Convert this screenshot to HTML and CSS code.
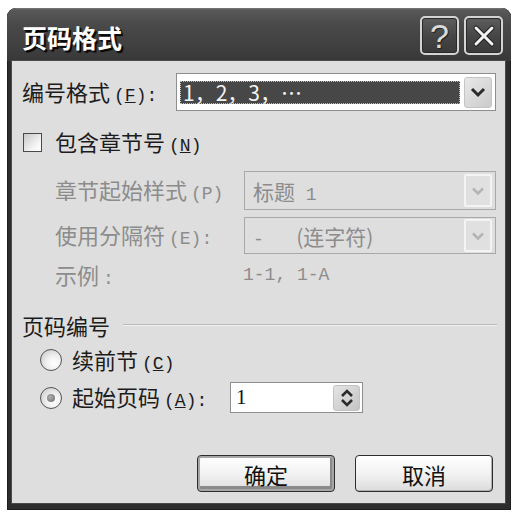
FILE: index.html
```html
<!DOCTYPE html>
<html>
<head>
<meta charset="utf-8">
<link rel="stylesheet" href="styles.css">
</head>
<body>
<div class="dialog">
  <div class="titlebar">
    <span class="title">页码格式</span>
    <div class="tb-btns">
      <div class="tb-btn help">?</div>
      <div class="tb-btn close">
        <svg width="26" height="26" viewBox="0 0 26 26"><path d="M5 5 L21 21 M21 5 L5 21" stroke="#222" stroke-width="5" stroke-linecap="round"/><path d="M5 5 L21 21 M21 5 L5 21" stroke="#f2f2f2" stroke-width="3" stroke-linecap="round"/></svg>
      </div>
    </div>
  </div>
  <div class="client">
    <div class="row r1">
      <span class="lbl lbl1">编号格式<span class="acc">(<u>F</u>):</span></span>
      <div class="combo combo1">
        <div class="sel">1，2，3，⋯</div>
        <div class="dd"><svg width="16" height="12" viewBox="0 0 16 12"><path d="M2 3 L8 9 L14 3" fill="none" stroke="#2a2a2a" stroke-width="3"/></svg></div>
      </div>
    </div>
    <div class="row r2">
      <span class="chk"></span>
      <span class="lbl">包含章节号<span class="acc">(<u>N</u>)</span></span>
    </div>
    <div class="row r3 indent">
      <span class="lbl dis lbl3">章节起始样式<span class="acc">(P)</span></span>
      <div class="combo combo2">
        <span class="val">标题<span class="mono"> 1</span></span>
        <div class="dd dd-dis"><svg width="14" height="10" viewBox="0 0 14 10"><path d="M2 2.5 L7 7.5 L12 2.5" fill="none" stroke="#b4b4b4" stroke-width="2.5"/></svg></div>
      </div>
    </div>
    <div class="row r4 indent">
      <span class="lbl dis lbl3">使用分隔符<span class="acc">(E):</span></span>
      <div class="combo combo2">
        <span class="val"><span class="mono">-   </span>(连字符)</span>
        <div class="dd dd-dis"><svg width="14" height="10" viewBox="0 0 14 10"><path d="M2 2.5 L7 7.5 L12 2.5" fill="none" stroke="#b4b4b4" stroke-width="2.5"/></svg></div>
      </div>
    </div>
    <div class="row r5 indent">
      <span class="lbl dis lbl5">示例<span class="acc">:</span></span>
      <span class="dis mono">1-1, 1-A</span>
    </div>
    <div class="row grp">
      <span class="lbl">页码编号</span>
      <span class="grp-line"></span>
    </div>
    <div class="row rad1">
      <span class="radio"></span>
      <span class="lbl">续前节<span class="acc">(<u>C</u>)</span></span>
    </div>
    <div class="row rad2">
      <span class="radio checked"></span>
      <span class="lbl lbl-spin">起始页码<span class="acc">(<u>A</u>):</span></span>
      <div class="spin">
        <span class="spin-val">1</span>
        <div class="spin-btn"><svg width="14" height="20" viewBox="0 0 14 20"><path d="M2 8 L7 3 L12 8" fill="none" stroke="#2a2a2a" stroke-width="2.6"/><path d="M2 12 L7 17 L12 12" fill="none" stroke="#2a2a2a" stroke-width="2.6"/></svg></div>
      </div>
    </div>
    <div class="row btns">
      <div class="btn default">确定</div>
      <div class="btn">取消</div>
    </div>
  </div>
</div>
</body>
</html>
```

FILE: styles.css
```css
html, body {
  margin: 0;
  padding: 0;
  background: #ffffff;
}
body {
  font-family: "Noto Sans CJK SC", "Noto Sans", sans-serif;
  color: #1c1c1c;
}
.dialog {
  margin: 8px 0 0 7px;
  width: 504px;
  height: 502px;
  background: #2d2d2d;
  border-radius: 9px 9px 0 0;
  display: flex;
  flex-direction: column;
  box-shadow: inset 0 0 0 1px #1e1e1e;
}
.titlebar {
  height: 53px;
  flex: none;
  box-sizing: border-box;
  display: flex;
  align-items: center;
  justify-content: space-between;
  padding: 0 8px 0 15px;
  border-radius: 9px 9px 0 0;
  background: linear-gradient(#7a7a7a 0, #585858 2px, #4a4a4a 30%, #404040 70%, #383838 100%);
}
.title {
  color: #ffffff;
  font-size: 25px;
  font-weight: bold;
  margin-top: 4px;
  text-shadow: 1px 1px 0 #111, 2px 2px 1px #000;
}
.tb-btns {
  display: flex;
  gap: 5px;
  margin-top: 2px;
}
.tb-btn {
  width: 39px;
  height: 39px;
  box-sizing: border-box;
  border: 2px solid #d4d4d4;
  border-radius: 5px;
  background: linear-gradient(#5e5e5e, #464646 50%, #3a3a3a);
  display: flex;
  align-items: center;
  justify-content: center;
  box-shadow: inset 0 0 0 1px #2a2a2a;
}
.help {
  font-family: "Liberation Sans", sans-serif;
  font-size: 34px;
  color: #dadada;
  line-height: 1;
  text-shadow: 1px 1px 0 #222;
}
.client {
  flex: 1;
  margin: 0 6px 7px 5px;
  background: #dedede;
  padding: 12px 9px 0 10px;
  box-shadow: 0 0 0 1px #4a4a4a;
}
.row {
  display: flex;
  align-items: center;
}
.lbl {
  font-size: 22px;
  line-height: 1;
  white-space: nowrap;
}
.acc {
  font-family: "Liberation Mono", monospace;
  font-size: 18px;
  margin-left: 4px;
}
.mono {
  font-family: "Liberation Mono", monospace;
  font-size: 18px;
  white-space: pre;
}
.dis {
  color: #8c8c8c;
}
.r1 { height: 38px; }
.lbl1 { width: 154px; }
.combo {
  box-sizing: border-box;
  height: 100%;
  border: 1px solid #8e8e8e;
  background: #ffffff;
  display: flex;
  align-items: center;
  padding: 0 3px;
}
.combo1 { width: 320px; }
.sel {
  flex: 1;
  height: 23px;
  margin-right: 4px;
  box-sizing: border-box;
  background: #474747;
  outline: 1px dotted #bdbdbd;
  outline-offset: -1px;
  color: #f4f4f4;
  font-size: 21px;
  line-height: 23px;
  padding-left: 3px;
  white-space: nowrap;
}
.dd {
  width: 28px;
  height: 31px;
  box-sizing: border-box;
  border: 1px solid #c4c4c4;
  border-radius: 3px;
  background: linear-gradient(135deg, #e8e8e8, #cbcbcb);
  display: flex;
  align-items: center;
  justify-content: center;
}
.r2 {
  height: 28px;
  margin-top: 17px;
}
.chk {
  width: 19px;
  height: 19px;
  box-sizing: border-box;
  margin-left: 1px;
  margin-right: 13px;
  border: 1px solid #4a4a4a;
  background: linear-gradient(135deg, #c8c8c8, #f6f6f6 70%, #ffffff);
}
.indent { padding-left: 33px; }
.r3 {
  height: 39px;
  margin-top: 15px;
}
.r4 {
  height: 37px;
  margin-top: 7px;
}
.lbl3 { width: 189px; }
.combo2 {
  width: 252px;
  background: #dedede;
  border-color: #a8a8a8;
  justify-content: space-between;
  padding-left: 8px;
}
.val {
  font-size: 21px;
  color: #8c8c8c;
  white-space: pre;
}
.dd-dis {
  height: 33px;
  border: 2px solid #f4f4f4;
  border-radius: 2px;
  background: #e0e0e0;
}
.r5 {
  height: 26px;
  margin-top: 8px;
}
.lbl5 { width: 188px; }
.grp {
  height: 24px;
  margin-top: 25px;
}
.grp-line {
  flex: 1;
  height: 0;
  border-top: 1px solid #b9b9b9;
  border-bottom: 1px solid #f0f0f0;
  margin-left: 13px;
  margin-right: -1px;
}
.rad1 {
  height: 26px;
  margin-top: 10px;
}
.rad2 {
  height: 31px;
  margin-top: 9px;
}
.radio {
  width: 22px;
  height: 22px;
  box-sizing: border-box;
  margin-left: 18px;
  margin-right: 10px;
  border-radius: 50%;
  border: 1px solid #555;
  background: radial-gradient(circle at 65% 65%, #ffffff 0, #f2f2f2 35%, #c4c4c4 100%);
  display: flex;
  align-items: center;
  justify-content: center;
}
.radio.checked::after {
  content: "";
  width: 8px;
  height: 8px;
  border-radius: 50%;
  background: radial-gradient(circle at 40% 40%, #b0b0b0, #6a6a6a);
}
.lbl-spin { width: 158px; }
.spin {
  width: 133px;
  height: 31px;
  box-sizing: border-box;
  border: 1px solid #8e8e8e;
  background: #ffffff;
  display: flex;
  align-items: center;
  justify-content: space-between;
  padding: 0 2px 0 5px;
}
.spin-val {
  font-family: "Liberation Serif", serif;
  font-size: 21px;
  color: #111;
}
.spin-btn {
  width: 27px;
  height: 26px;
  box-sizing: border-box;
  border: 1px solid #c2c2c2;
  border-radius: 3px;
  background: linear-gradient(135deg, #e4e4e4, #c4c4c4);
  display: flex;
  align-items: center;
  justify-content: center;
}
.btns {
  height: 37px;
  margin-top: 42px;
  justify-content: flex-end;
  gap: 20px;
  padding-right: 3px;
}
.btn {
  width: 138px;
  height: 37px;
  box-sizing: border-box;
  border: 1px solid #2e2e2e;
  border-radius: 4px;
  background: linear-gradient(#ffffff, #f2f2f2 50%, #dcdcdc);
  display: flex;
  align-items: center;
  justify-content: center;
  font-size: 22px;
  color: #111;
  box-shadow: inset -1px -1px 0 #b0b0b0;
}
.btn.default {
  box-shadow: inset 0 0 0 2px #a6a6a6, inset -2px -3px 0 2px #8a8a8a;
}
```
